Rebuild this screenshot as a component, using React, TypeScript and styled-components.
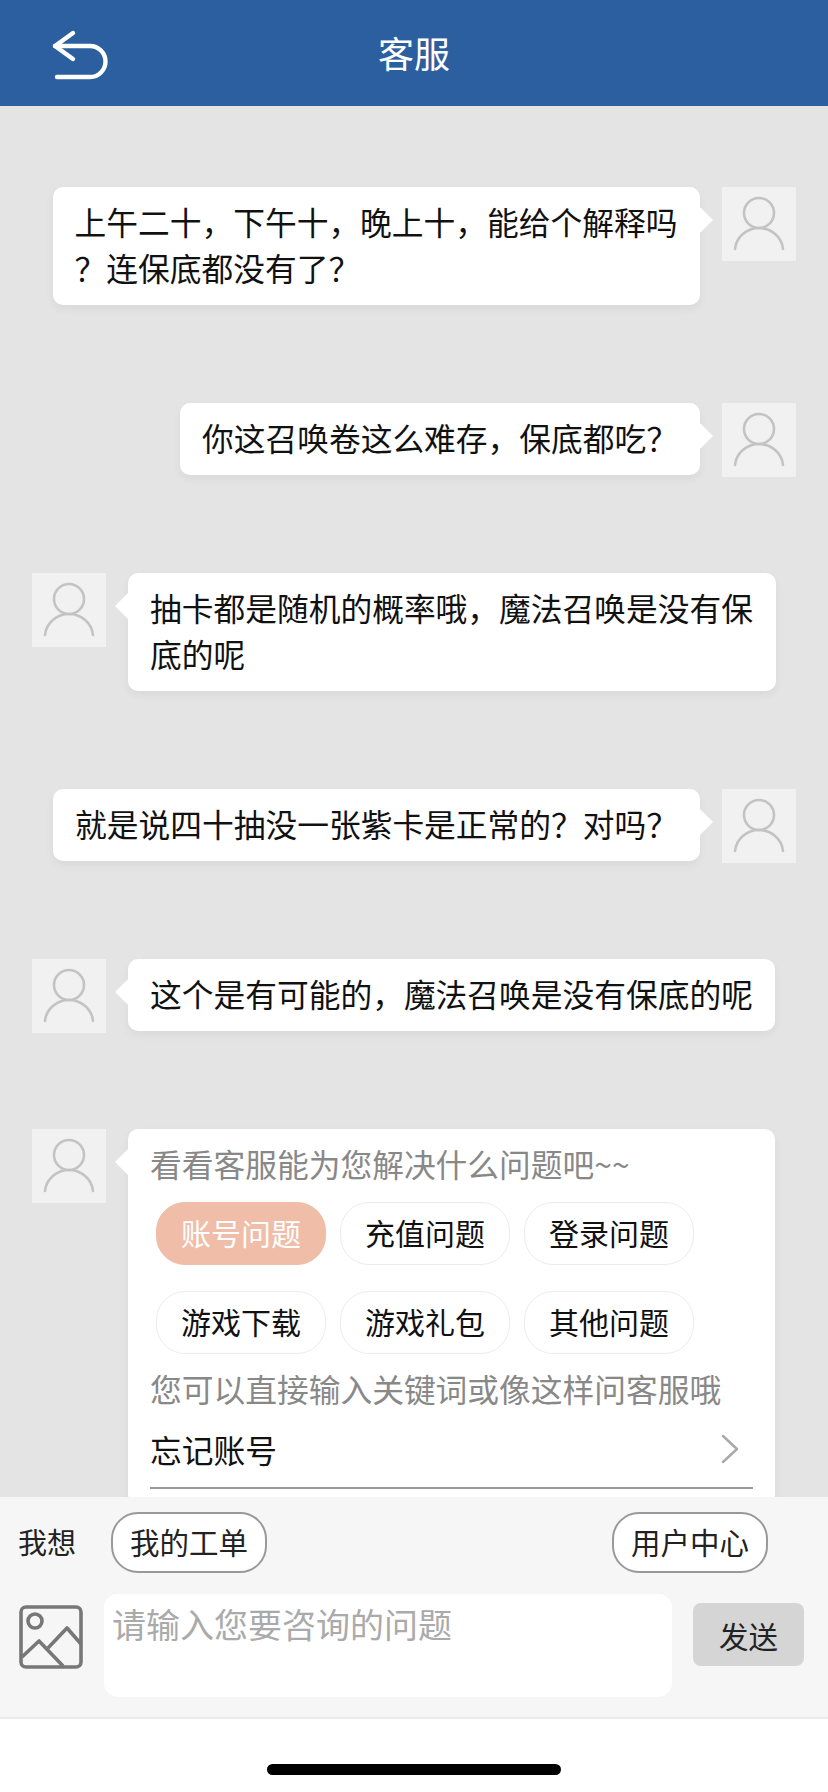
import styled, { createGlobalStyle } from "styled-components";

const GlobalStyle = createGlobalStyle`
  html, body {
    margin: 0;
    padding: 0;
    background: #fff;
  }
  * {
    box-sizing: border-box;
  }
  body {
    font-family: "Noto Sans CJK SC", "Noto Sans", sans-serif;
    color: #111;
  }
`;

const Page = styled.div`
  display: flex;
  flex-direction: column;
  width: 828px;
  height: 1792px;
  overflow: hidden;
`;

const Header = styled.header`
  display: grid;
  grid-template-columns: 1fr auto 1fr;
  align-items: center;
  flex: 0 0 106px;
  background: #2c5f9f;
`;

const BackButton = styled.button`
  display: flex;
  justify-self: start;
  margin: 6px 0 0 50px;
  padding: 0;
  background: none;
  border: none;
  cursor: pointer;
`;

const Title = styled.h1`
  margin: 0 0 2px;
  color: #fff;
  font-size: 36px;
  font-weight: 400;
  line-height: 50px;
`;

const Chat = styled.main`
  flex: 0 0 1391px;
  padding: 81px 32px 0;
  overflow: hidden;
  background: #e4e4e4;
`;

const Row = styled.div<{ $mine?: boolean }>`
  display: flex;
  align-items: flex-start;
  justify-content: ${({ $mine }) => ($mine ? "flex-end" : "flex-start")};
  gap: 22px;
  margin-bottom: 98px;
`;

const AvatarBox = styled.div`
  flex: 0 0 74px;
  height: 74px;
  margin-bottom: -2px;
  background: #f1f1f1;
`;

const Bubble = styled.div<{ $mine?: boolean; $wide?: boolean }>`
  position: relative;
  ${({ $wide }) => ($wide ? "width: 647px;" : "max-width: 647.5px;")}
  padding: 11px 22px 15px;
  background: #fff;
  border-radius: 10px;
  box-shadow: 0 4px 10px rgba(0, 0, 0, 0.05);
  font-size: 31.74px;
  line-height: 46px;
  line-break: anywhere;

  &::after {
    content: "";
    position: absolute;
    top: 20px;
    ${({ $mine }) => ($mine ? "right: -13px;" : "left: -13px;")}
    border-top: 13px solid transparent;
    border-bottom: 13px solid transparent;
    ${({ $mine }) =>
      $mine ? "border-left: 13px solid #fff;" : "border-right: 13px solid #fff;"}
  }
`;

const Hint = styled.div`
  color: #888;
  white-space: nowrap;
`;

const ChipGrid = styled.div`
  display: grid;
  grid-template-columns: repeat(3, 170px);
  gap: 26px 14px;
  margin: 16px 0 11px 6px;
`;

const Chip = styled.button<{ $active?: boolean }>`
  height: 63px;
  padding: 0 0 3px;
  background: ${({ $active }) => ($active ? "#efbda8" : "#fff")};
  border: 1px solid ${({ $active }) => ($active ? "#efbda8" : "#ececec")};
  border-radius: 29px;
  color: ${({ $active }) => ($active ? "#fff" : "#111")};
  font-family: inherit;
  font-size: 30px;
  cursor: pointer;
`;

const QuestionRow = styled.div`
  display: flex;
  align-items: center;
  justify-content: space-between;
  height: 78px;
  padding-right: 14px;
  border-bottom: 2px solid #999;
`;

const Footer = styled.footer`
  display: flex;
  flex-direction: column;
  gap: 21px;
  flex: 0 0 222px;
  padding-top: 15px;
  background: #f6f6f6;
  border-bottom: 2px solid #ebebeb;
`;

const ShortcutRow = styled.div`
  display: flex;
  align-items: center;
  padding: 0 60px 0 18px;
`;

const ShortcutLabel = styled.span`
  flex: 0 0 93px;
  padding-bottom: 4px;
  font-size: 29px;
  color: #222;
`;

const ShortcutButton = styled.button`
  width: 156px;
  height: 61px;
  padding: 0 0 3px;
  background: #fff;
  border: 2px solid #999;
  border-radius: 27px;
  color: #222;
  font-family: inherit;
  font-size: 29.5px;
  cursor: pointer;

  &:last-child {
    margin-left: auto;
  }
`;

const InputRow = styled.div`
  display: flex;
  align-items: flex-start;
  padding-left: 18px;
`;

const PictureButton = styled.button`
  display: flex;
  flex: 0 0 66px;
  margin: 10px 20px 0 0;
  padding: 0;
  background: none;
  border: none;
  cursor: pointer;
`;

const MessageInput = styled.textarea`
  flex: 0 0 568px;
  height: 103px;
  padding: 7px 8px;
  background: #fff;
  border: none;
  border-radius: 14px;
  outline: none;
  resize: none;
  font-family: inherit;
  font-size: 34px;
  line-height: 46px;

  &::placeholder {
    color: #aaa;
    opacity: 1;
  }
`;

const SendButton = styled.button`
  flex: 0 0 111px;
  height: 63px;
  margin: 9px 0 0 21px;
  padding: 0;
  background: #d5d5d5;
  border: none;
  border-radius: 8px;
  color: #222;
  font-family: inherit;
  font-size: 29.5px;
  cursor: pointer;
`;

const HomeArea = styled.div`
  display: flex;
  justify-content: center;
  flex: 0 0 73px;
  padding-top: 45px;
  background: #fff;
`;

const HomeIndicator = styled.div`
  width: 294px;
  height: 11px;
  background: #000;
  border-radius: 6px;
`;

const Avatar = () => (
  <AvatarBox>
    <svg width="74" height="74" viewBox="0 0 74 74" fill="none" stroke="#c3c3c3" strokeWidth="2.6" strokeLinecap="round">
      <circle cx="37" cy="26" r="15" />
      <path d="M13 62C14 50 25 41 37 41C49 41 60 50 61 62" />
    </svg>
  </AvatarBox>
);

const messages = [
  { mine: true, text: "上午二十，下午十，晚上十，能给个解释吗？连保底都没有了？" },
  { mine: true, text: "你这召唤卷这么难存，保底都吃？" },
  { mine: false, text: "抽卡都是随机的概率哦，魔法召唤是没有保底的呢" },
  { mine: true, text: "就是说四十抽没一张紫卡是正常的？对吗？" },
  { mine: false, text: "这个是有可能的，魔法召唤是没有保底的呢" },
];

const topics = ["账号问题", "充值问题", "登录问题", "游戏下载", "游戏礼包", "其他问题"];

export default function App() {
  return (
    <Page>
      <GlobalStyle />
      <Header>
        <BackButton aria-label="返回">
          <svg width="64" height="56" viewBox="0 0 64 56" fill="none" stroke="#fff" strokeWidth="4.4" strokeLinecap="round" strokeLinejoin="round">
            <path d="M23 5L5 18L23 31" />
            <path d="M5 18H40A15.5 15.5 0 0 1 40 49H7" />
          </svg>
        </BackButton>
        <Title>客服</Title>
      </Header>

      <Chat>
        {messages.map((message, index) => (
          <Row key={index} $mine={message.mine}>
            {!message.mine && <Avatar />}
            <Bubble $mine={message.mine}>{message.text}</Bubble>
            {message.mine && <Avatar />}
          </Row>
        ))}
        <Row>
          <Avatar />
          <Bubble $wide>
            <Hint>看看客服能为您解决什么问题吧~~</Hint>
            <ChipGrid>
              {topics.map((topic, index) => (
                <Chip key={topic} $active={index === 0}>
                  {topic}
                </Chip>
              ))}
            </ChipGrid>
            <Hint>您可以直接输入关键词或像这样问客服哦</Hint>
            <QuestionRow>
              <span>忘记账号</span>
              <svg width="18" height="30" viewBox="0 0 18 30" fill="none" stroke="#aaa" strokeWidth="2.5" strokeLinecap="round" strokeLinejoin="round">
                <path d="M2 2L16 15L2 28" />
              </svg>
            </QuestionRow>
          </Bubble>
        </Row>
      </Chat>

      <Footer>
        <ShortcutRow>
          <ShortcutLabel>我想</ShortcutLabel>
          <ShortcutButton>我的工单</ShortcutButton>
          <ShortcutButton>用户中心</ShortcutButton>
        </ShortcutRow>
        <InputRow>
          <PictureButton aria-label="图片">
            <svg width="66" height="66" viewBox="0 0 66 66" fill="none" stroke="#777" strokeWidth="3.6" strokeLinejoin="round">
              <rect x="3" y="3" width="60" height="60" rx="5" />
              <circle cx="17" cy="17" r="7" />
              <path d="M4 53L21 37L45 62" />
              <path d="M30 44L49 24L63 40" />
            </svg>
          </PictureButton>
          <MessageInput placeholder="请输入您要咨询的问题" />
          <SendButton>发送</SendButton>
        </InputRow>
      </Footer>

      <HomeArea>
        <HomeIndicator />
      </HomeArea>
    </Page>
  );
}
